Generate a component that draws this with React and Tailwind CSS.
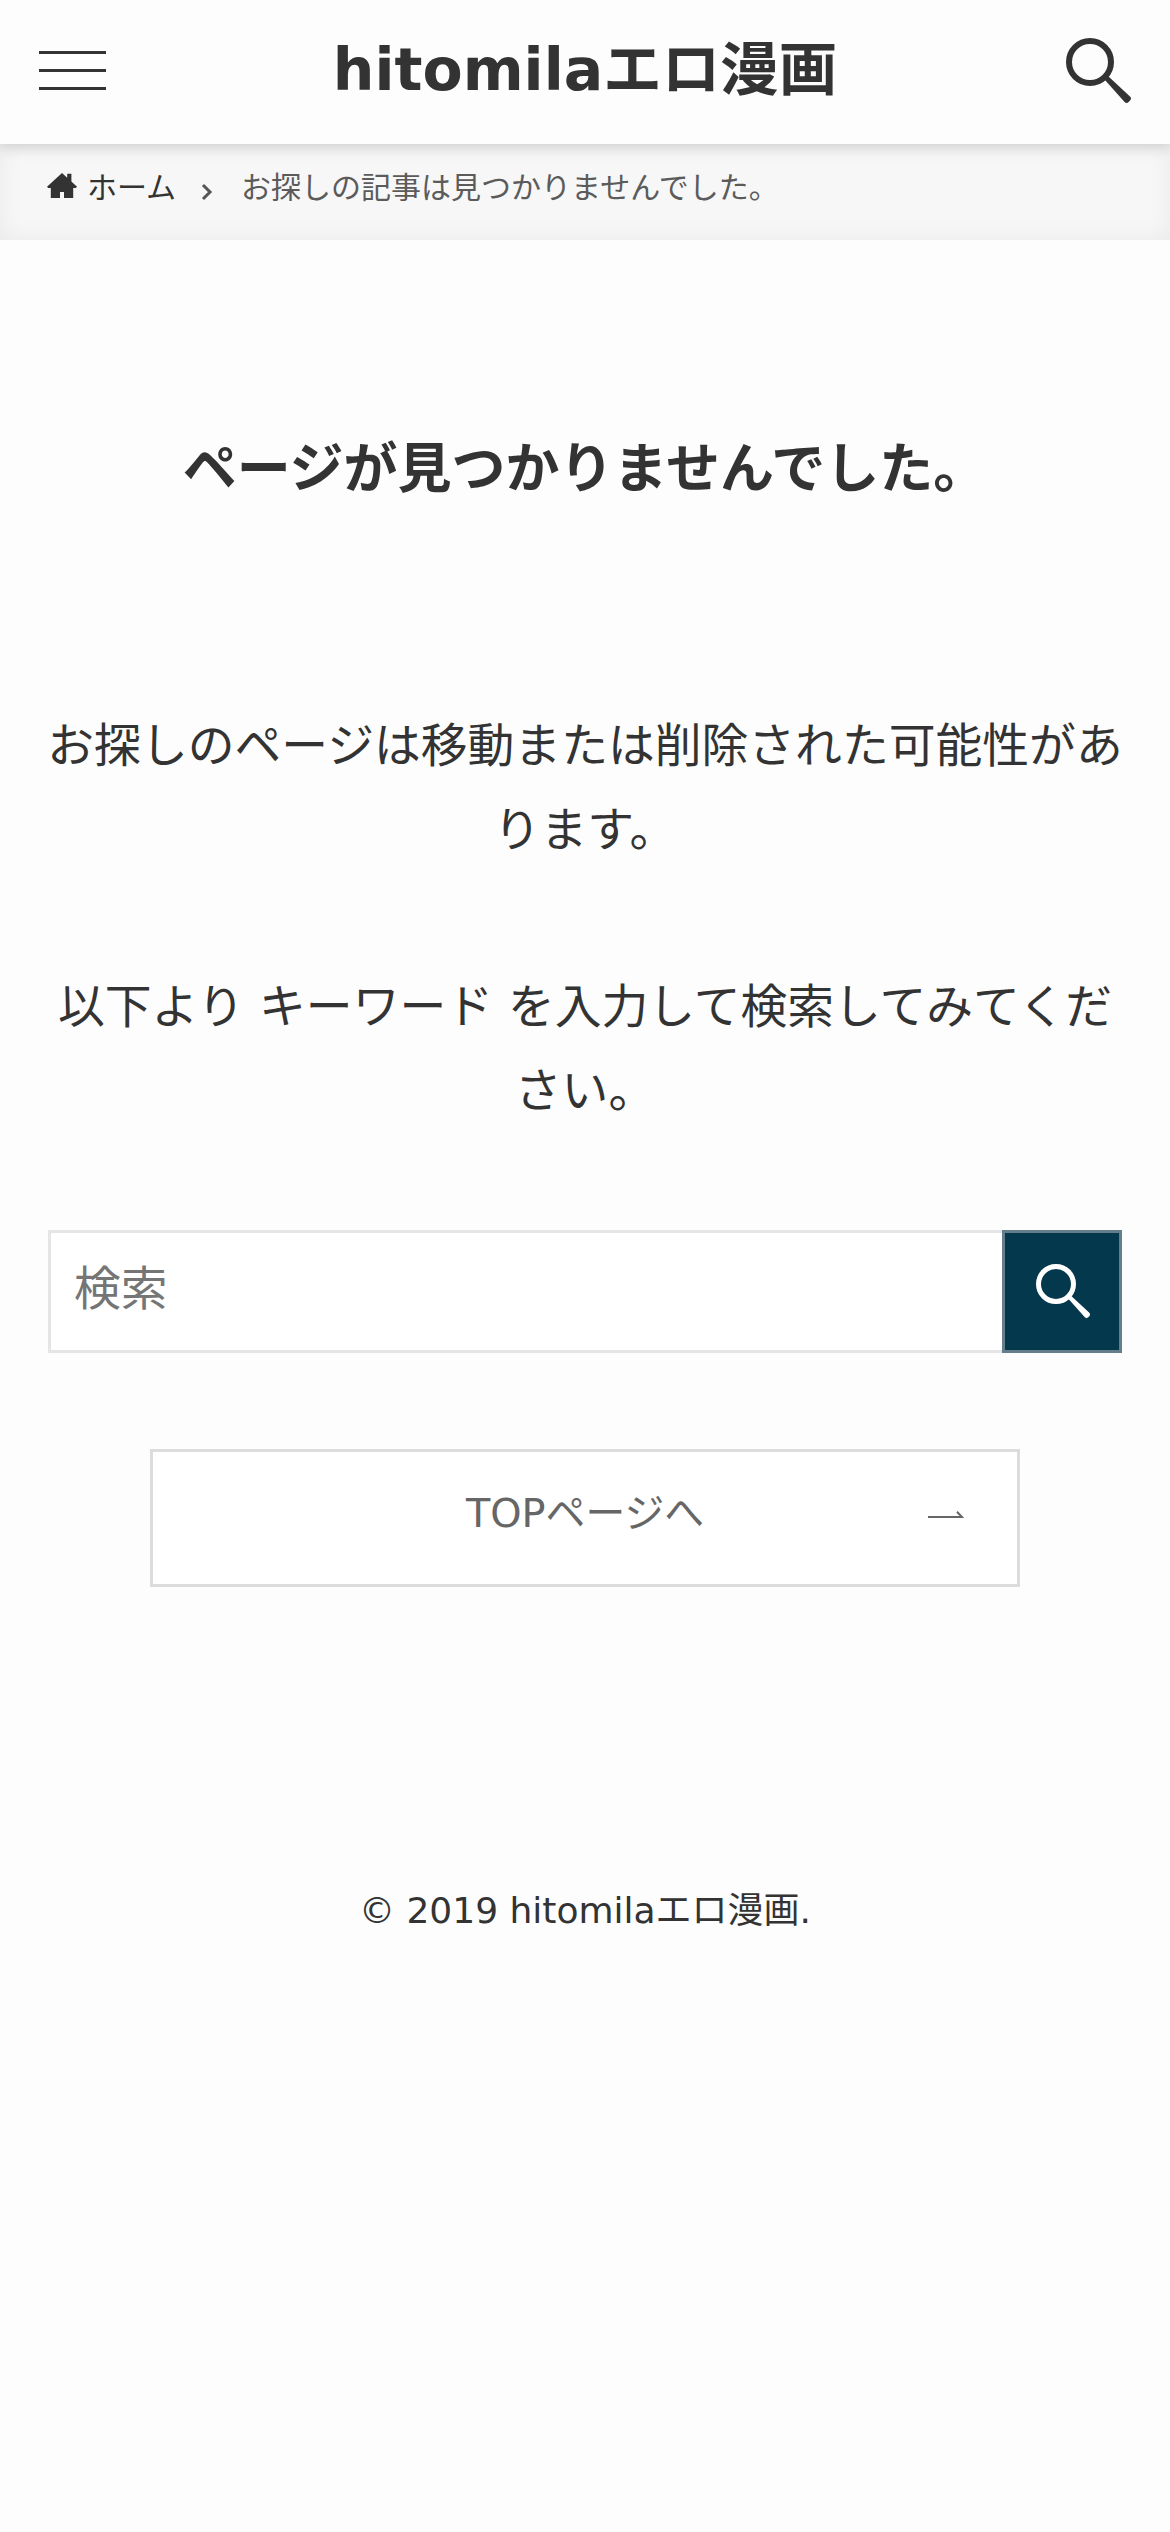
function SearchIcon({ className }) {
  return (
    <svg viewBox="0 0 66 66" className={className} fill="none" aria-hidden="true">
      <circle cx="24" cy="24" r="21" stroke="currentColor" strokeWidth="6" />
      <path
        d="M38.5 41.5 42 38 64 58.6Q66 60.6 64 62.6L62.6 64Q60.6 66 58.6 64Z"
        fill="currentColor"
      />
    </svg>
  );
}

function HomeIcon({ className }) {
  return (
    <svg viewBox="0 0 30 25" className={className} fill="currentColor" aria-hidden="true">
      <path d="M15 0 20.2 4.8V.8H24.4V8.6L30 13.8 28.8 15H26.2V25H17V19H13V25H3.8V15H1.2L0 13.8Z" />
    </svg>
  );
}

function Header() {
  return (
    <header className="relative z-10 flex h-36 items-center justify-between bg-[#fdfdfd] pl-[39px] pr-[38px] shadow-[0_3px_12px_rgba(0,0,0,0.14)]">
      <button aria-label="メニューボタン" className="flex w-[67px] flex-col gap-[15px] pb-[3px]">
        <span className="h-[3px] w-full bg-[#333]" />
        <span className="h-[3px] w-full bg-[#333]" />
        <span className="h-[3px] w-full bg-[#333]" />
      </button>
      <h1 className="mr-0.5 pb-1 text-[58.5px] leading-none font-bold">hitomilaエロ漫画</h1>
      <button aria-label="検索ボタン" className="pb-[3px]">
        <SearchIcon className="size-[66px]" />
      </button>
    </header>
  );
}

function Breadcrumb() {
  return (
    <nav className="flex h-24 items-center bg-[#f7f7f7] pb-2 pl-[47px] text-[30px] leading-none shadow-[inset_0_0_24px_rgba(0,0,0,0.06)]">
      <a href="#" className="flex items-center">
        <HomeIcon className="mr-[10px] mb-[5px] h-[25px] w-[30px]" />
        ホーム
      </a>
      <svg viewBox="0 0 12 18" className="mt-2 ml-[25px] h-[18px] w-3" fill="none">
        <path d="M2 2 9 9 2 16" stroke="#555" strokeWidth="3" />
      </svg>
      <span className="ml-[28px] text-[#5b5b5b]">お探しの記事は見つかりませんでした。</span>
    </nav>
  );
}

export default function App() {
  return (
    <div className="min-h-[2532px] bg-[#fdfdfd] font-['DejaVu_Sans','Noto_Sans_CJK_JP',sans-serif] text-[#333]">
      <Header />
      <Breadcrumb />

      <main className="px-12 pt-48 text-center">
        <h2 className="text-[54px] leading-[75px] font-bold">
          ページが見つかりませんでした。
        </h2>

        <div className="-mx-1 mt-[197px] text-[46.8px] leading-[84px] whitespace-nowrap">
          <p>
            お探しのページは移動または削除された可能性があ
            <br />
            ります。
          </p>
          <p className="mt-[93px]">
            以下より キーワード を入力して検索してみてくだ
            <br />
            さい。
          </p>
        </div>

        {/* 検索フォーム */}
        <form className="mt-[97px] flex h-[123px]">
          <input
            type="text"
            placeholder="検索"
            className="min-w-0 flex-1 border-[3px] border-r-0 border-[#e5e5e5] bg-white px-[23px] pb-1 text-[46.8px] placeholder:text-[#757575]"
          />
          <button
            type="button"
            aria-label="検索を実行する"
            className="flex w-[120px] items-center justify-center border-[3px] border-[#647f8b] bg-[#04384c] pl-[3px] text-white"
          >
            <SearchIcon className="size-[55px]" />
          </button>
        </form>

        <a
          href="#"
          className="relative mx-auto mt-24 flex h-[138px] w-[870px] items-center justify-center border-[3px] border-[#dcdcdc] bg-white pb-2 text-[39.8px] leading-none text-[#666]"
        >
          TOPページへ
          <svg viewBox="0 0 36 8" className="absolute top-[59px] right-[53px] h-2 w-9" fill="none">
            <path d="M0 6H34L29 .7" stroke="#666" strokeWidth="2" />
          </svg>
        </a>
      </main>

      <footer className="mt-[297px] text-center text-[36px] leading-[54px]">
        © 2019 hitomilaエロ漫画.
      </footer>
    </div>
  );
}
